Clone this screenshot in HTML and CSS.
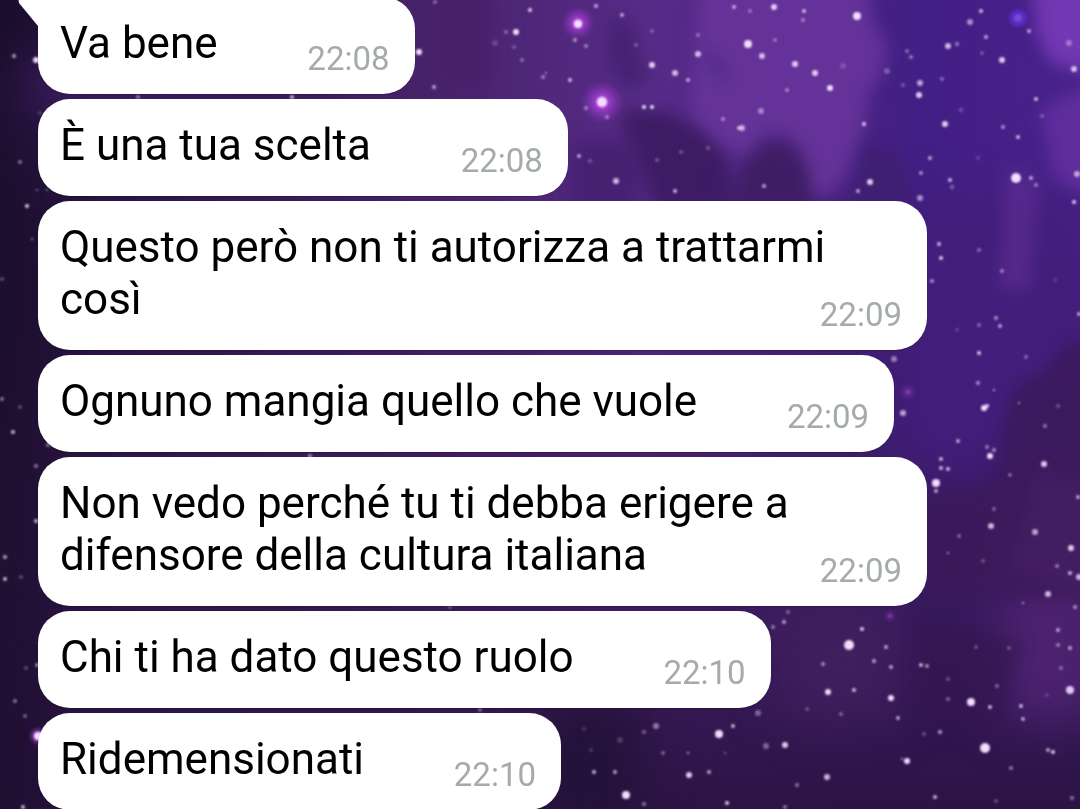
FILE: index.html
```html
<!DOCTYPE html>
<html lang="it">
<head>
    <meta charset="UTF-8">
    <meta name="viewport" content="width=device-width, initial-scale=1.0">
    <title>Chat</title>
    <link rel="stylesheet" href="styles.css">
</head>
<body>
    <!-- Sfondo galassia -->
    <svg class="wallpaper" viewBox="0 0 1080 809" preserveAspectRatio="xMidYMid slice" aria-hidden="true">
        <defs>
            <linearGradient id="sky" x1="0" y1="0" x2="1" y2="0">
                <stop offset="0" stop-color="#1e1032"/>
                <stop offset="0.1" stop-color="#2a1444"/>
                <stop offset="0.4" stop-color="#48236c"/>
                <stop offset="0.6" stop-color="#572b88"/>
                <stop offset="0.85" stop-color="#421f84"/>
                <stop offset="1" stop-color="#48228a"/>
            </linearGradient>
            <linearGradient id="shade" x1="0" y1="0" x2="0" y2="1">
                <stop offset="0.2" stop-color="#2a1444" stop-opacity="0"/>
                <stop offset="0.6" stop-color="#35174f" stop-opacity="0.5"/>
                <stop offset="1" stop-color="#2a1342" stop-opacity="0.95"/>
            </linearGradient>
            <radialGradient id="pink">
                <stop offset="0" stop-color="#f08cff"/>
                <stop offset="0.35" stop-color="#b040dc" stop-opacity="0.7"/>
                <stop offset="1" stop-color="#8a35c0" stop-opacity="0"/>
            </radialGradient>
            <filter id="soft" x="-20%" y="-20%" width="140%" height="140%" color-interpolation-filters="sRGB"><feGaussianBlur stdDeviation="8"/></filter>
            <filter id="wide" x="-50%" y="-50%" width="200%" height="200%" color-interpolation-filters="sRGB"><feGaussianBlur stdDeviation="24"/></filter>
            <filter id="glow" x="-5%" y="-5%" width="110%" height="110%" color-interpolation-filters="sRGB"><feGaussianBlur stdDeviation="1"/></filter>
        </defs>
        <rect width="1080" height="809" fill="url(#sky)"/>
        <rect width="1080" height="809" fill="url(#shade)"/>
        <!-- Nebulose -->
        <g filter="url(#wide)">
            <path d="M-60 180H30L60 350L50 900H-60Z" fill="#190d28" opacity="0.6"/>
            <path d="M-60 -60H40V40L20 80H-60Z" fill="#1b0e2c"/>
            <path d="M20 60L240 70V110H40Z" fill="#401e68"/>
            <path d="M915 200H1080V390L980 460H900Z" fill="#421f7c"/>
            <path d="M780 600H900V720H780Z" fill="#42205f" opacity="0.8"/>
            <path d="M540 700H640V840H540Z" fill="#24123a"/>
            <path d="M1000 540H1100V720H1000Z" fill="#4d2270"/>
        </g>
        <g filter="url(#soft)">
            <path d="M700 -20H865L872 18L888 50L880 78L869 92L866 120L855 150L846 175L828 195H812L808 165L795 140L765 130L748 155L720 150L690 110Z" fill="#67349a" opacity="0.9"/>
            <path d="M1032 -20H1100V70H1070L1048 60L1036 30Z" fill="#7237b2"/>
            <path d="M1040 110L1100 80V200L1055 180Z" fill="#652fa2" opacity="0.8"/>
            <path d="M1005 165L1040 180L1030 290H1000Z" fill="#5c2b92" opacity="0.7"/>
            <path d="M610 18L632 22L640 60L650 80L628 90L608 65Z" fill="#452273"/>
            <path d="M625 110L668 112L700 130L725 150L735 210H655L640 160L622 130Z" fill="#3b1b60" opacity="0.9"/>
            <path d="M755 148L785 140L808 165L815 210H735L740 170Z" fill="#3e1d62" opacity="0.9"/>
            <path d="M700 45L722 60L730 90L712 72Z" fill="#50298a"/>
            <path d="M430 -10H490V90H440Z" fill="#482069"/>
            <path d="M570 140H640V210H570Z" fill="#482173"/>
            <path d="M865 140L900 155L912 210H850Z" fill="#3f1f72"/>
            <path d="M1100 335L1065 345L1042 372L1015 388L1004 415L1000 470L980 490H930L915 560L930 600H1100Z" fill="#3b1959" opacity="0.85"/>
            <path d="M1035 470L1100 480V600L1010 570Z" fill="#492166" opacity="0.5"/>
            <path d="M920 620L960 630L1020 640L1000 730H915Z" fill="#34164f" opacity="0.6"/>
        </g>
        <!-- Stelle -->
        <circle cx="578" cy="23" r="17" fill="url(#pink)"/>
        <circle cx="602" cy="102" r="22" fill="url(#pink)"/>
        <circle cx="38" cy="736" r="10" fill="url(#pink)"/>
        <circle cx="1018" cy="18" r="9" fill="#6a30ff" opacity="0.5" filter="url(#glow)"/>
        <circle cx="908" cy="392" r="9" fill="url(#pink)" opacity="0.4"/>
        <circle cx="890" cy="616" r="7" fill="url(#pink)" opacity="0.4"/>
        <g id="stars" filter="url(#glow)" fill="#f2deff"></g>
    </svg>

    <main class="chat">
        <div class="bubble bubble-first">
            <svg class="tail" viewBox="0 0 22 30" aria-hidden="true"><path d="M0 0L1 6L20 29H22V0Z" fill="#fff"/></svg>
            <p class="text">Va bene</p>
            <time class="time">22:08</time>
        </div>
        <div class="bubble">
            <p class="text">È una tua scelta</p>
            <time class="time">22:08</time>
        </div>
        <div class="bubble">
            <p class="text">Questo però non ti autorizza a trattarmi così</p>
            <time class="time">22:09</time>
        </div>
        <div class="bubble">
            <p class="text">Ognuno mangia quello che vuole</p>
            <time class="time">22:09</time>
        </div>
        <div class="bubble">
            <p class="text">Non vedo perché tu ti debba erigere a difensore della cultura italiana</p>
            <time class="time">22:09</time>
        </div>
        <div class="bubble">
            <p class="text">Chi ti ha dato questo ruolo</p>
            <time class="time">22:10</time>
        </div>
        <div class="bubble">
            <p class="text">Ridemensionati</p>
            <time class="time">22:10</time>
        </div>
    </main>

    <script src="script.js"></script>
</body>
</html>
```

FILE: styles.css
```css
* {
    box-sizing: border-box;
}
body {
    margin: 0;
    min-height: 100vh;
    overflow: hidden;
    background-color: #35184f;
    font-family: Roboto, sans-serif;
}
.wallpaper {
    position: fixed;
    top: 0;
    left: 0;
    width: 100%;
    height: 100%;
    z-index: -1;
}
.chat {
    display: flex;
    flex-direction: column;
    align-items: flex-start;
    gap: 5px;
    margin-top: -3px;
    padding: 0 153px 0 38px;
}
/* testo e orario condividono la stessa cella */
.bubble {
    position: relative;
    display: grid;
    max-width: 100%;
    padding: 20px 25px 18px 22px;
    background-color: #fff;
    border-radius: 32px;
    box-shadow: 0 1px 1px rgba(0, 0, 0, 0.2);
}
.bubble-first {
    border-top-left-radius: 0;
}
.tail {
    position: absolute;
    top: 0;
    left: -20px;
    width: 22px;
    height: 30px;
}
.text {
    grid-area: 1 / 1;
    margin: 0;
    padding-bottom: 7px;
    font-size: 44px;
    line-height: 52px;
    color: #000;
}
/* spazio riservato all'orario in fondo all'ultima riga */
.text::after {
    content: "";
    display: inline-block;
    width: 172px;
}
.time {
    grid-area: 1 / 1;
    align-self: end;
    justify-self: end;
    font-size: 33px;
    line-height: 34px;
    color: #a5abad;
}
```

FILE: script.js
```js
// Stelle: x, y, raggio, opacità
const stars = [
    [14, 56, 2, 0.7], [36, 60, 3, 1], [20, 162, 2, 0.5], [27, 206, 2, 0.9], [37, 190, 1, 0.6], [47, 190, 1, 0.6], [40, 113, 2, 0.2],
    [32, 239, 1, 0.7], [2, 279, 2, 0.3], [2, 399, 2, 0.5], [20, 407, 2, 0.3], [13, 432, 2, 0.8], [36, 466, 2, 0.5], [48, 445, 2, 0.5],
    [36, 521, 2, 0.8], [5, 557, 2, 0.7], [5, 579, 2, 0.8], [21, 577, 2, 0.3], [26, 668, 2, 0.3], [37, 665, 2, 0.6], [15, 701, 2, 0.5],
    [25, 716, 2, 0.4], [38, 736, 4, 1], [23, 807, 2, 0.8], [138, 97, 2, 0.5], [292, 97, 2, 0.8], [419, 52, 3, 1], [434, 87, 2, 0.7],
    [435, 2, 2, 0.4], [530, 10, 2, 0.9], [516, 32, 3, 1], [506, 32, 2, 0.4], [514, 47, 2, 0.3], [522, 60, 2, 0.4], [495, 43, 3, 0.2],
    [578, 24, 4, 1], [602, 102, 5, 1], [575, 40, 2, 0.6], [586, 46, 2, 0.5], [596, 6, 2, 0.7], [622, 15, 2, 0.7], [570, 80, 2, 0.8],
    [546, 73, 1, 0.7], [543, 77, 2, 0.5], [586, 108, 2, 0.5], [607, 117, 2, 0.5], [636, 45, 2, 0.3], [652, 31, 2, 0.3], [652, 65, 3, 0.9],
    [644, 107, 2, 1], [652, 107, 2, 1], [675, 73, 3, 0.8], [688, 80, 2, 0.7], [698, 54, 3, 0.8], [698, 35, 2, 0.4], [734, 7, 2, 0.7],
    [723, 119, 2, 0.5], [739, 128, 2, 0.8], [742, 128, 3, 0.7], [579, 156, 2, 0.7], [590, 161, 2, 0.3], [616, 181, 3, 0.8], [675, 191, 2, 0.8],
    [681, 152, 2, 0.3], [708, 148, 2, 0.3], [657, 160, 2, 0.3], [750, 11, 2, 0.4], [774, 7, 3, 0.9], [804, 11, 2, 0.8], [803, 20, 2, 0.5],
    [857, 16, 4, 1], [748, 44, 4, 1], [762, 56, 3, 0.8], [775, 40, 2, 0.4], [795, 64, 3, 0.9], [815, 73, 3, 0.9], [830, 88, 3, 1],
    [787, 90, 2, 0.5], [761, 111, 3, 0.5], [864, 124, 2, 0.9], [843, 66, 3, 0.2], [870, 182, 3, 0.9], [858, 191, 2, 0.7], [764, 186, 2, 0.7],
    [887, 71, 3, 0.3], [911, 57, 2, 0.5], [907, 51, 2, 0.4], [903, 85, 2, 0.3], [919, 95, 3, 0.9], [920, 83, 3, 0.7], [942, 79, 2, 0.4],
    [948, 46, 3, 0.8], [957, 44, 2, 0.5], [970, 22, 3, 0.6], [981, 11, 2, 0.8], [986, 37, 2, 0.7], [982, 53, 2, 0.3], [1018, 18, 4, 0.2],
    [1029, 31, 2, 0.7], [1002, 60, 3, 0.9], [1074, 69, 3, 0.8], [1036, 99, 2, 0.8], [1042, 116, 2, 0.3], [1003, 127, 2, 0.6], [1018, 137, 2, 0.8],
    [945, 124, 3, 0.9], [961, 110, 2, 0.3], [930, 158, 2, 0.7], [921, 173, 2, 0.6], [920, 198, 3, 0.6], [950, 180, 2, 0.8], [952, 187, 2, 0.4],
    [1016, 178, 5, 1], [1031, 178, 2, 0.7], [1036, 185, 2, 0.5], [1077, 174, 3, 0.7], [1074, 202, 2, 0.9], [1069, 43, 3, 0.4], [978, 158, 2, 0.2],
    [939, 244, 2, 0.8], [941, 258, 2, 0.9], [979, 250, 2, 0.4], [932, 281, 2, 0.6], [1002, 271, 2, 0.5], [1055, 280, 2, 0.2], [1079, 314, 2, 0.7],
    [996, 318, 2, 0.6], [1000, 326, 2, 0.7], [979, 325, 2, 0.4], [979, 353, 2, 0.9], [957, 330, 2, 0.2], [1026, 357, 2, 0.4], [894, 359, 3, 0.5],
    [903, 413, 3, 0.7], [978, 383, 2, 0.6], [994, 390, 1, 0.9], [984, 408, 3, 1], [987, 406, 2, 0.9], [1019, 403, 1, 0.8], [1058, 406, 2, 0.3],
    [1045, 426, 2, 0.5], [958, 441, 2, 0.7], [990, 456, 3, 1], [994, 450, 2, 0.6], [987, 447, 2, 0.5], [1044, 464, 3, 0.9], [1010, 475, 2, 0.4],
    [941, 459, 2, 0.8], [941, 468, 2, 0.8], [948, 469, 2, 0.8], [936, 483, 4, 1], [936, 491, 2, 0.7], [991, 526, 3, 0.8], [1035, 532, 3, 0.7],
    [994, 509, 2, 0.4], [1078, 497, 2, 0.7], [959, 536, 2, 0.4], [948, 553, 1, 0.8], [983, 561, 2, 0.3], [1071, 548, 3, 0.9], [1057, 566, 2, 0.5],
    [1070, 573, 2, 0.8], [1079, 577, 3, 0.8], [1048, 594, 3, 0.8], [1023, 603, 1, 0.8], [1075, 607, 2, 0.6], [1058, 630, 2, 0.7], [1058, 645, 2, 0.5],
    [1070, 648, 2, 0.7], [1061, 668, 2, 0.4], [1070, 690, 4, 0.9], [1047, 695, 2, 0.2], [784, 622, 2, 0.7], [788, 612, 2, 0.4], [773, 627, 2, 0.5],
    [849, 645, 5, 1], [862, 629, 2, 0.9], [886, 647, 2, 0.7], [874, 661, 2, 0.7], [891, 667, 2, 0.7], [823, 664, 2, 0.6], [828, 692, 3, 1],
    [854, 690, 2, 0.8], [891, 698, 3, 1], [898, 718, 2, 0.7], [807, 709, 2, 0.3], [841, 714, 2, 0.4], [921, 665, 2, 0.8], [927, 666, 2, 0.6],
    [971, 702, 4, 1], [990, 707, 2, 0.8], [1021, 706, 2, 0.8], [1023, 719, 2, 0.7], [948, 679, 2, 0.3], [948, 699, 2, 0.4], [997, 686, 2, 0.4],
    [976, 647, 2, 0.3], [1009, 648, 2, 0.3], [940, 732, 2, 0.7], [924, 734, 2, 0.3], [985, 748, 5, 1], [907, 761, 3, 1], [902, 759, 1, 0.8],
    [1048, 750, 2, 0.7], [1053, 752, 2, 0.9], [1011, 768, 2, 0.5], [935, 797, 2, 0.8], [1072, 798, 2, 0.5], [996, 801, 2, 0.3], [785, 745, 3, 0.9],
    [766, 746, 3, 0.4], [758, 713, 3, 0.4], [827, 777, 3, 0.8], [797, 785, 2, 0.5], [785, 807, 2, 0.5], [719, 734, 4, 1], [733, 726, 2, 0.8],
    [656, 726, 3, 0.5], [644, 732, 2, 0.4], [584, 729, 2, 0.2], [620, 740, 3, 0.2], [688, 753, 1, 0.9], [663, 753, 2, 0.4], [725, 753, 1, 0.5],
    [594, 772, 2, 0.8], [615, 772, 2, 0.7], [689, 775, 3, 0.9], [709, 772, 2, 0.7], [626, 795, 4, 1], [644, 804, 2, 0.5], [727, 803, 2, 0.9],
    [591, 750, 2, 0.2], [480, 710, 2, 0.4], [450, 607, 2, 0.3], [310, 456, 2, 0.6]
];

const group = document.getElementById('stars');

stars.forEach(([x, y, r, opacity]) => {
    const star = document.createElementNS('http://www.w3.org/2000/svg', 'circle');
    star.setAttribute('cx', x);
    star.setAttribute('cy', y);
    star.setAttribute('r', r);
    star.setAttribute('opacity', opacity);
    group.appendChild(star);
});
```
